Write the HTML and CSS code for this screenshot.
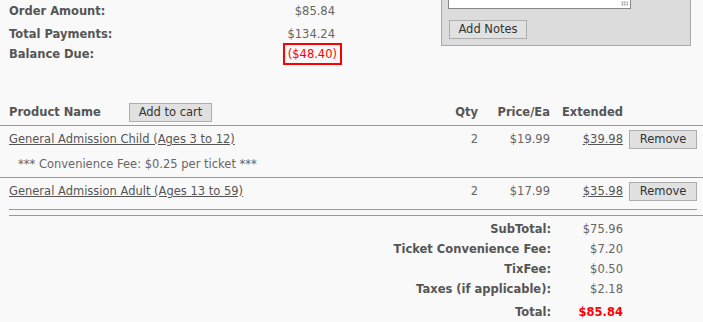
FILE: index.html
```html
<!DOCTYPE html>
<html>
<head>
<meta charset="utf-8">
<link rel="stylesheet" href="styles.css">
</head>
<body>
<div class="page">
  <div class="top">
    <div class="summary">
      <div class="srow r1"><span class="lbl">Order Amount:</span><span class="val">$85.84</span></div>
      <div class="srow r2"><span class="lbl">Total Payments:</span><span class="val">$134.24</span></div>
      <div class="srow r3"><span class="lbl">Balance Due:</span><span class="val due">($48.40)</span></div>
    </div>
    <div class="notes">
      <div class="textarea"><span class="grip"></span></div>
      <button class="btn notes-btn">Add Notes</button>
    </div>
  </div>

  <div class="cart">
    <div class="row head">
      <div class="c-name"><span class="hname">Product Name</span><button class="btn add">Add to cart</button></div>
      <div class="c-qty">Qty</div>
      <div class="c-price">Price/Ea</div>
      <div class="c-ext">Extended</div>
      <div class="c-act"></div>
    </div>
    <div class="item line-full">
      <div class="row">
        <div class="c-name"><a href="#">General Admission Child (Ages 3 to 12)</a></div>
        <div class="c-qty">2</div>
        <div class="c-price">$19.99</div>
        <div class="c-ext"><a href="#">$39.98</a></div>
        <div class="c-act"><button class="btn remove">Remove</button></div>
      </div>
      <div class="fee">*** Convenience Fee: $0.25 per ticket ***</div>
    </div>
    <div class="item line-inset">
      <div class="row">
        <div class="c-name"><a href="#">General Admission Adult (Ages 13 to 59)</a></div>
        <div class="c-qty">2</div>
        <div class="c-price">$17.99</div>
        <div class="c-ext"><a href="#">$35.98</a></div>
        <div class="c-act"><button class="btn remove">Remove</button></div>
      </div>
    </div>
    <div class="rule"></div>
  </div>

  <div class="totals">
    <div class="trow"><span class="tl">SubTotal:</span><span class="tv">$75.96</span></div>
    <div class="trow"><span class="tl">Ticket Convenience Fee:</span><span class="tv">$7.20</span></div>
    <div class="trow"><span class="tl">TixFee:</span><span class="tv">$0.50</span></div>
    <div class="trow"><span class="tl">Taxes (if applicable):</span><span class="tv">$2.18</span></div>
    <div class="trow total"><span class="tl">Total:</span><span class="tv">$85.84</span></div>
  </div>
</div>
</body>
</html>
```

FILE: styles.css
```css
* { box-sizing: border-box; }
html, body { margin: 0; padding: 0; background: #f9f9f9; }
body {
  font-family: "DejaVu Sans", Verdana, sans-serif;
  font-size: 11.5px;
  color: #666;
  width: 703px;
  height: 322px;
  overflow: hidden;
}

.top {
  display: flex;
  height: 91px;
}
.summary {
  width: 326px;
  margin-left: 9px;
  padding-top: 4px;
}
.srow {
  display: flex;
  justify-content: space-between;
  align-items: center;
  line-height: 14px;
}
.r1 { height: 14px; }
.r2 { height: 14px; margin-top: 9px; }
.r3 { height: 22px; margin-top: 2px; }
.lbl { font-weight: bold; color: #555; }
.val { color: #666; }
.due {
  color: #f00;
  border: 2px solid #f00;
  padding: 2px 3px;
  margin-right: -7px;
  line-height: 14px;
}

.notes {
  margin-left: 106px;
  margin-top: -20px;
  width: 250px;
  height: 66px;
  background: #dcdcdc;
  border: 1px solid #aaa;
  padding: 0 0 0 6px;
}
.textarea {
  position: relative;
  width: 183px;
  height: 28px;
  background: #fff;
  border: 1px solid #888;
  border-top: none;
}
.grip {
  position: absolute;
  right: 2px;
  bottom: 2px;
  width: 7px;
  height: 5px;
  background-image: radial-gradient(circle, #999 0.8px, transparent 0.9px);
  background-size: 2.5px 2.5px;
}
.btn {
  font-family: "DejaVu Sans", Verdana, sans-serif;
  font-size: 11.5px;
  color: #333;
  background: #e1e1e1;
  border: 1px solid #adadad;
  border-radius: 0;
  padding: 0;
  height: 19px;
  line-height: 17px;
}
.notes-btn { width: 78px; margin-top: 11px; margin-left: 1px; }

.cart { margin-top: 9px; }
.row {
  display: flex;
  align-items: center;
}
.head { height: 26px; border-bottom: 1px solid #999; padding-bottom: 1px; }
.head .c-name, .head .c-qty, .head .c-price, .head .c-ext { font-weight: bold; color: #555; }
.c-name { width: 440px; padding-left: 9px; display: flex; align-items: center; }
.hname { width: 120px; }
.add { width: 83px; }
.c-qty { width: 38px; text-align: right; }
.c-price { width: 72px; text-align: right; }
.c-ext { width: 73px; text-align: right; }
.c-act { width: 80px; padding-left: 6px; }
.remove { width: 68px; }
a { color: #555; text-decoration: underline; }
.item .row { height: 26px; }
.fee { padding-left: 18px; height: 25px; line-height: 25px; }
.line-full { border-bottom: 1px solid #999; }
.line-inset { border-bottom: 1px solid #999; margin: 0 6px 0 9px; padding-bottom: 5px; }
.line-inset .c-name { width: 431px; padding-left: 0; }
.line-inset .c-act { width: 74px; }
.rule { margin: 5px 0 0 9px; border-bottom: 1px solid #999; }

.totals { margin-top: 3px; }
.trow {
  display: flex;
  align-items: center;
  height: 20px;
}
.tl {
  width: 551px;
  text-align: right;
  font-weight: bold;
  color: #555;
}
.tv {
  width: 72px;
  text-align: right;
  color: #666;
}
.total { height: 26px; }
.total .tv { color: #f00; font-weight: bold; font-size: 11.5px; }
```
